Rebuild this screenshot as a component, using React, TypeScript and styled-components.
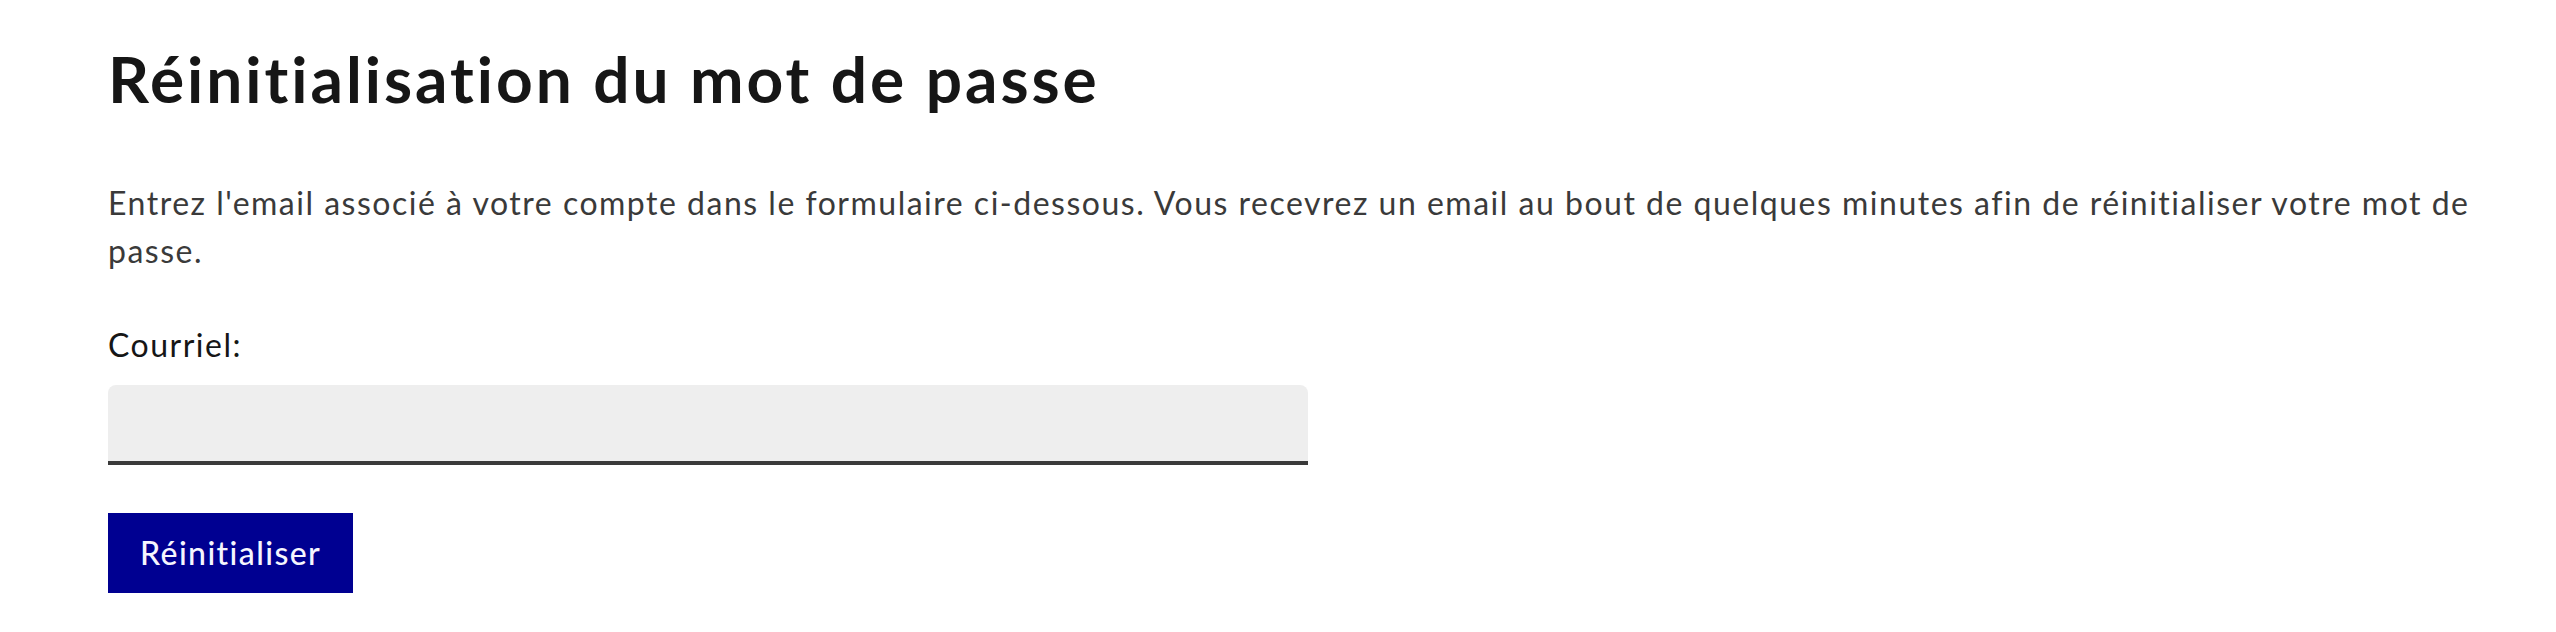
import React from "react";
import styled, { createGlobalStyle } from "styled-components";

const GlobalStyle = createGlobalStyle`
  html, body {
    margin: 0;
    padding: 0;
    background: #ffffff;
  }
  body {
    font-family: Lato, "Noto Sans", "Liberation Sans", sans-serif;
    font-variant-ligatures: none;
    color: #3a3a3a;
  }
`;

const Page = styled.main`
  padding: 39px 46px 0 108px;
  display: flex;
  flex-direction: column;
`;

const Title = styled.h1`
  margin: 0 0 60px;
  font-size: 64px;
  line-height: 80px;
  font-weight: 700;
  letter-spacing: 0.046em;
  color: #161616;
`;

const Intro = styled.p`
  margin: 0 0 46px;
  font-size: 32px;
  line-height: 48px;
  letter-spacing: 0.047em;
  color: #3a3a3a;
`;

const Form = styled.form`
  display: flex;
  flex-direction: column;
  align-items: flex-start;
`;

const Label = styled.label`
  font-size: 32px;
  line-height: 48px;
  letter-spacing: 0.047em;
  color: #161616;
  margin-bottom: 16px;
`;

const Input = styled.input`
  box-sizing: border-box;
  width: 1200px;
  height: 80px;
  margin: 0 0 48px;
  padding: 16px 32px;
  border: none;
  border-radius: 8px 8px 0 0;
  background: #eeeeee;
  box-shadow: inset 0 -4px 0 0 #3a3a3a;
  font-family: inherit;
  font-size: 32px;
  color: #3a3a3a;
  outline: none;
`;

const Button = styled.button`
  height: 80px;
  padding: 0 32px;
  border: none;
  background: #000091;
  color: #f5f5fe;
  font-family: inherit;
  font-variant-ligatures: none;
  letter-spacing: 0.044em;
  font-size: 32px;
  font-weight: 500;
  line-height: 48px;
  cursor: pointer;
`;

const App = () => {
  return (
    <>
      <GlobalStyle />
      <Page>
        <Title>Réinitialisation du mot de passe</Title>
        <Intro>
          Entrez l'email associé à votre compte dans le formulaire ci-dessous.
          Vous recevrez un email au bout de quelques minutes afin de
          réinitialiser votre mot de passe.
        </Intro>
        <Form onSubmit={(e) => e.preventDefault()}>
          <Label htmlFor="email">Courriel:</Label>
          <Input id="email" type="email" name="email" />
          <Button type="submit">Réinitialiser</Button>
        </Form>
      </Page>
    </>
  );
};

export default App;
